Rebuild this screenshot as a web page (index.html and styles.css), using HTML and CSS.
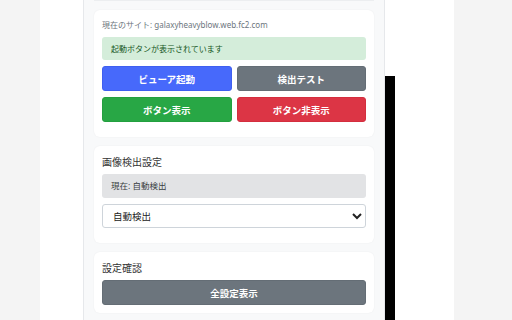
FILE: index.html
```html
<!DOCTYPE html>
<html>
	<head>
		<meta charset="utf-8">
		<title>ビューア設定</title>
		<link rel="stylesheet" href="styles.css">
	</head>
	<body>
		<div class="page">
			<div class="popup">
				<div class="card-tail"></div>

				<div class="card">
					<div class="site-info">現在のサイト: galaxyheavyblow.web.fc2.com</div>
					<div class="status status-ok">起動ボタンが表示されています</div>
					<div class="button-grid">
						<button class="btn btn-blue">ビューア起動</button>
						<button class="btn btn-gray">検出テスト</button>
						<button class="btn btn-green">ボタン表示</button>
						<button class="btn btn-red">ボタン非表示</button>
					</div>
				</div>

				<div class="card">
					<h3 class="card-title">画像検出設定</h3>
					<div class="status status-info">現在: 自動検出</div>
					<select class="mode-select">
						<option value="auto" selected>自動検出</option>
						<option value="manual">手動選択</option>
					</select>
				</div>

				<div class="card card-last">
					<h3 class="card-title">設定確認</h3>
					<button class="btn btn-gray btn-wide">全設定表示</button>
				</div>
			</div>
			<div class="page-bar"></div>
		</div>
	</body>
</html>
```

FILE: styles.css
```css
body {
	margin: 0;
	background: #f4f4f4;
	font-family: "Noto Sans", "Noto Sans CJK JP", sans-serif;
	color: #333;
}

.page {
	position: relative;
	width: 414px;
	height: 320px;
	margin-left: 40px;
	background: #ffffff;
	overflow: hidden;
}

.popup {
	width: 280px;
	height: 320px;
	margin-left: 43px;
	padding: 0 10px;
	background: #f8f9fa;
	border-left: 1px solid #e6e8eb;
	border-right: 1px solid #e6e8eb;
}

.card-tail {
	height: 1px;
	background: #eceef0;
	margin-bottom: 9px;
}

.card {
	background: #ffffff;
	border-radius: 6px;
	padding: 8px 8px 15px;
	margin-bottom: 9px;
	box-shadow: 0 0 2px rgba(0, 0, 0, 0.06);
}

.card-last {
	padding-bottom: 8px;
}

.site-info {
	font-size: 8px;
	line-height: 14px;
	color: #6c757d;
	margin-bottom: 5px;
}

.status {
	height: 23px;
	line-height: 23px;
	padding: 0 9px;
	border-radius: 3px;
	font-size: 8px;
}

.status-ok {
	background: #d4edda;
	color: #155724;
	margin-bottom: 6px;
}

.status-info {
	height: 24px;
	line-height: 24px;
	background: #e2e3e5;
	color: #383d41;
	font-size: 8.5px;
	margin-bottom: 6px;
}

.button-grid {
	display: grid;
	grid-template-columns: 1fr 1fr;
	gap: 6px 5px;
}

.btn {
	height: 25px;
	border: 1px solid transparent;
	border-radius: 3px;
	font-family: inherit;
	font-size: 9.5px;
	font-weight: bold;
	color: #ffffff;
	padding: 0;
}

.btn-blue {
	background: #4769fb;
	border-color: #3f5ff0;
}

.btn-gray {
	background: #6c757d;
	border-color: #646d75;
}

.btn-green {
	background: #28a745;
	border-color: #23a03f;
}

.btn-red {
	background: #dc3545;
	border-color: #d42e3e;
}

.btn-wide {
	display: block;
	width: 100%;
}

.card-title {
	margin: 0 0 4px;
	font-size: 10px;
	line-height: 16px;
	font-weight: normal;
	color: #333;
}

.mode-select {
	display: block;
	width: 100%;
	height: 24px;
	padding: 0 6px;
	border: 1px solid #ced4da;
	border-radius: 3px;
	background: #ffffff;
	font-family: inherit;
	font-size: 9.5px;
	color: #222;
}

.page-bar {
	position: absolute;
	left: 345px;
	top: 76px;
	width: 10px;
	height: 244px;
	background: #000000;
}
```
